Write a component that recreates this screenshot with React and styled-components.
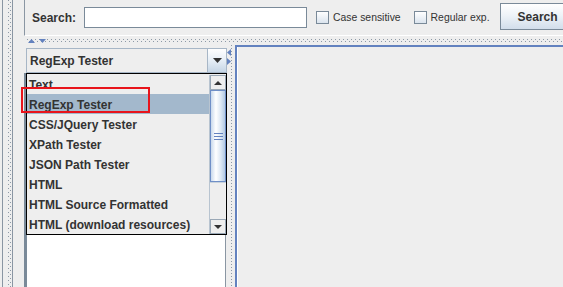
import React from "react";
import styled, { createGlobalStyle } from "styled-components";

const GlobalStyle = createGlobalStyle`
  html, body {
    margin: 0;
    padding: 0;
    background: #eeeeee;
    font-family: "Liberation Sans", Arial, sans-serif;
  }
`;

const items = [
  "Text",
  "RegExp Tester",
  "CSS/JQuery Tester",
  "XPath Tester",
  "JSON Path Tester",
  "HTML",
  "HTML Source Formatted",
  "HTML (download resources)",
];

const Frame = styled.div`
  display: flex;
  width: 563px;
  height: 287px;
  overflow: hidden;
  background: #eeeeee;
`;

const LeftStrip = styled.div`
  width: 24px;
  flex: none;
  display: flex;
`;

const StripLine = styled.div`
  width: 1px;
  margin-left: ${(p) => p.$ml}px;
  background: #8a96a3;
`;

const VDots = styled.div`
  width: 3px;
  margin-left: ${(p) => p.$ml}px;
  background:
    linear-gradient(180deg, #8d99a6 1px, transparent 1px) 0 0 / 1px 4px repeat-y,
    linear-gradient(180deg, #8d99a6 1px, transparent 1px) 2px 2px / 1px 4px repeat-y;
`;

const Main = styled.div`
  flex: 1;
  display: flex;
  flex-direction: column;
  min-width: 0;
`;

const SearchBar = styled.div`
  height: 35px;
  flex: none;
  display: flex;
  align-items: center;
  border-left: 1px solid #8a96a3;
  border-bottom: 1px solid #ffffff;
  padding-left: 7px;
  white-space: nowrap;
  overflow: hidden;
  & > * {
    flex: none;
  }
`;

const Label = styled.span`
  font-size: 12px;
  font-weight: bold;
  color: #333;
  margin-right: 8px;
  margin-top: 1px;
`;

const TextField = styled.div`
  width: 221px;
  height: 19px;
  background: #ffffff;
  border: 1px solid #7a8a99;
  margin-right: 9px;
`;

const Check = styled.label`
  display: flex;
  align-items: center;
  font-size: 10.4px;
  color: #333;
  margin-right: ${(p) => p.$mr}px;
`;

const Box = styled.span`
  width: 11px;
  height: 11px;
  border: 1px solid #7a8a99;
  background: linear-gradient(180deg, #ffffff, #dbe4ee);
  margin-right: 4px;
`;

const SearchButton = styled.div`
  width: 80px;
  height: 27px;
  display: flex;
  align-items: center;
  padding-left: 17px;
  box-sizing: border-box;
  border: 1px solid #7a8a99;
  background: linear-gradient(180deg, #ffffff 0%, #eef3f8 45%, #d2deeb 100%);
  font-size: 12px;
  font-weight: bold;
  color: #333;
  margin-top: -2px;
`;

const HDivider = styled.div`
  height: 9px;
  flex: none;
  position: relative;
  display: flex;
  align-items: center;
  padding-left: 4px;
  gap: 4px;
`;

const HDots = styled.div`
  position: absolute;
  left: 3px;
  right: 0;
  top: 3px;
  height: 3px;
  background:
    linear-gradient(90deg, #8d99a6 1px, transparent 1px) 0 0 / 4px 1px repeat-x,
    linear-gradient(90deg, #8d99a6 1px, transparent 1px) 2px 2px / 4px 1px repeat-x;
`;

const Arrow = styled.svg`
  position: relative;
  display: block;
  flex: none;
`;

const Lower = styled.div`
  flex: 1;
  display: flex;
  min-height: 0;
`;

const LeftPanel = styled.div`
  width: 203px;
  flex: none;
  display: flex;
  flex-direction: column;
  position: relative;
`;

const ComboRow = styled.div`
  height: 25px;
  margin: 3px 0 0 2px;
  display: flex;
  position: relative;
  z-index: 2;
`;

const ComboField = styled.div`
  flex: 1;
  box-sizing: border-box;
  border: 1px solid #a7b6c6;
  border-right: none;
  display: flex;
  align-items: center;
  padding-left: 3px;
  font-size: 12px;
  font-weight: bold;
  color: #333;
  background: #eeeeee;
`;

const ComboButton = styled.div`
  width: 20px;
  box-sizing: border-box;
  border: 1px solid #a7b6c6;
  background: linear-gradient(180deg, #ffffff 0%, #e6eef6 50%, #c5d5e5 100%);
  display: flex;
  align-items: center;
  justify-content: center;
`;

const Popup = styled.div`
  position: absolute;
  top: 25px;
  left: 0;
  width: 201px;
  height: 162px;
  box-sizing: border-box;
  border: 1px solid #000;
  background: #eeeeee;
  display: flex;
`;

const List = styled.div`
  flex: 1;
  display: flex;
  flex-direction: column;
`;

const Item = styled.div`
  height: 20px;
  display: flex;
  align-items: center;
  padding-left: 2px;
  padding-top: 1px;
  box-sizing: border-box;
  font-size: 12px;
  font-weight: bold;
  color: #333;
  white-space: nowrap;
  background: ${(p) => (p.$selected ? "#a3b8cc" : "transparent")};
`;

const Highlight = styled.div`
  position: absolute;
  left: -6px;
  top: 13px;
  width: 129px;
  height: 26px;
  box-sizing: border-box;
  border: 2px solid #e8141b;
  pointer-events: none;
`;

const ScrollBar = styled.div`
  width: 16px;
  display: flex;
  flex-direction: column;
  border-left: 1px solid #b8c4d0;
  margin: 1px 0 0;
`;

const ScrollBtn = styled.div`
  height: 15px;
  box-sizing: border-box;
  border: 1px solid #9aa8b6;
  background: #eeeeee;
  display: flex;
  align-items: center;
  justify-content: center;
`;

const Thumb = styled.div`
  height: 92px;
  box-sizing: border-box;
  border: 1px solid #6f8fc7;
  background: linear-gradient(90deg, #c9d9ec 0%, #ffffff 35%, #dce7f3 70%, #b3c9e3 100%);
  display: flex;
  flex-direction: column;
  align-items: center;
  justify-content: center;
  gap: 2px;
`;

const Grip = styled.span`
  width: 9px;
  height: 1px;
  background: #6382bf;
`;

const Track = styled.div`
  flex: 1;
  border-top: 1px solid #c8d2dc;
`;

const ContentArea = styled.div`
  flex: 1;
  background: #ffffff;
  border-left: 3px solid #7a8a99;
  border-right: 1px solid #8a96a3;
  margin-right: 1px;
`;

const VDivider = styled.div`
  width: 8px;
  flex: none;
  position: relative;
  display: flex;
  flex-direction: column;
  align-items: flex-start;
  padding-top: 4px;
  gap: 2px;
`;

const VDividerDots = styled.div`
  position: absolute;
  left: 4px;
  top: 0;
  bottom: 0;
  width: 1px;
  background: linear-gradient(180deg, #8d99a6 1px, transparent 1px) 0 0 / 1px 3px repeat-y;
`;

const RightPanel = styled.div`
  flex: 1;
  border-left: 2px solid #6382bf;
  border-top: 2px solid #6382bf;
  box-shadow: inset 1px 0 0 #ffffff;
  background: #eeeeee;
`;

const Tri = ({ dir, color = "#333", w = 8, h = 4 }) => {
  const pts = {
    down: `0,0 ${w},0 ${w / 2},${h}`,
    up: `0,${h} ${w},${h} ${w / 2},0`,
    left: `${w},0 ${w},${h} 0,${h / 2}`,
    right: `0,0 0,${h} ${w},${h / 2}`,
  }[dir];
  return (
    <Arrow width={w} height={h} viewBox={`0 0 ${w} ${h}`}>
      <polygon points={pts} fill={color} />
    </Arrow>
  );
};

export default function App() {
  return (
    <>
      <GlobalStyle />
      <Frame>
        <LeftStrip>
          <StripLine $ml={2} />
          <VDots $ml={5} />
          <StripLine $ml={1} />
        </LeftStrip>
        <Main>
          <SearchBar>
            <Label>Search:</Label>
            <TextField />
            <Check $mr={13}>
              <Box />
              Case sensitive
            </Check>
            <Check $mr={10}>
              <Box />
              Regular exp.
            </Check>
            <SearchButton>Search</SearchButton>
          </SearchBar>
          <HDivider>
            <HDots />
            <Tri dir="up" color="#6382bf" w={7} h={4} />
            <Tri dir="down" color="#6382bf" w={7} h={4} />
          </HDivider>
          <Lower>
            <LeftPanel>
              <ComboRow>
                <ComboField>RegExp Tester</ComboField>
                <ComboButton>
                  <Tri dir="down" w={9} h={5} />
                </ComboButton>
                <Popup>
                  <List>
                    {items.map((it, i) => (
                      <Item key={it} $selected={i === 1}>
                        {it}
                      </Item>
                    ))}
                  </List>
                  <ScrollBar>
                    <ScrollBtn>
                      <Tri dir="up" w={8} h={4} />
                    </ScrollBtn>
                    <Thumb>
                      <Grip />
                      <Grip />
                      <Grip />
                    </Thumb>
                    <Track />
                    <ScrollBtn>
                      <Tri dir="down" w={8} h={4} />
                    </ScrollBtn>
                  </ScrollBar>
                  <Highlight />
                </Popup>
              </ComboRow>
              <ContentArea />
            </LeftPanel>
            <VDivider>
              <VDividerDots />
              <Tri dir="left" color="#6382bf" w={4} h={7} />
              <Tri dir="right" color="#6382bf" w={4} h={7} />
            </VDivider>
            <RightPanel />
          </Lower>
        </Main>
      </Frame>
    </>
  );
}
